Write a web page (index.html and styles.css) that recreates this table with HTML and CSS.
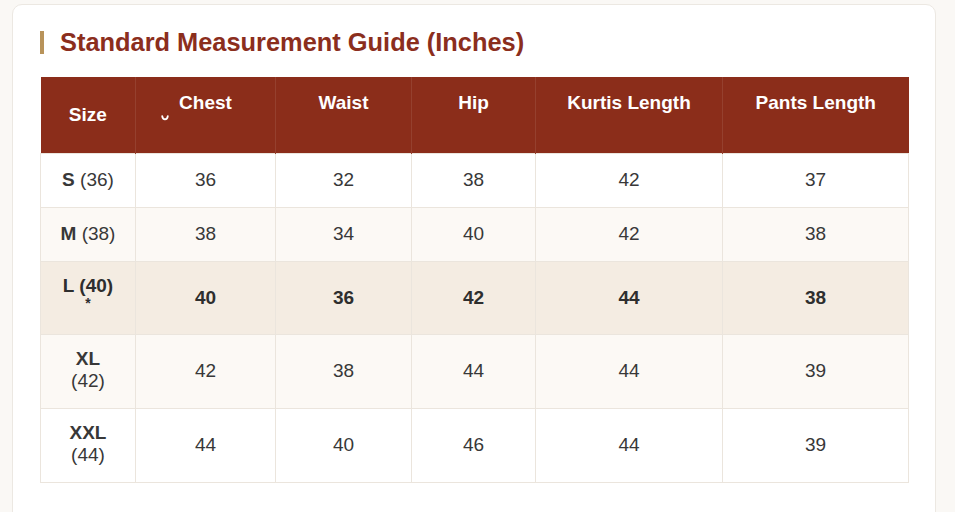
FILE: index.html
```html
<!DOCTYPE html>
<html>
<head>
<meta charset="utf-8">
<link rel="stylesheet" href="styles.css">
</head>
<body>
<div class="card">
  <h2 class="title"><span class="bar"></span>Standard Measurement Guide (Inches)</h2>
  <table class="guide">
    <colgroup>
      <col class="c-size"><col class="c-chest"><col class="c-waist"><col class="c-hip"><col class="c-kurti"><col class="c-pants">
    </colgroup>
    <thead>
      <tr>
        <th class="th-size">Size</th>
        <th class="th-top"><span class="sort">
          <svg width="8" height="6" viewBox="0 0 8 6"><path d="M1.2 1.2 Q1.6 4.4 4 4.4 Q6.4 4.4 6.8 1.2" fill="none" stroke="#fff" stroke-width="1.8" stroke-linecap="round" stroke-linejoin="round"/></svg>
        </span>Chest</th>
        <th class="th-top">Waist</th>
        <th class="th-top">Hip</th>
        <th class="th-top">Kurtis Length</th>
        <th class="th-top">Pants Length</th>
      </tr>
    </thead>
    <tbody>
      <tr class="r-short">
        <td class="size"><b>S</b> (36)</td><td>36</td><td>32</td><td>38</td><td>42</td><td>37</td>
      </tr>
      <tr class="r-short alt">
        <td class="size"><b>M</b> (38)</td><td>38</td><td>34</td><td>40</td><td>42</td><td>38</td>
      </tr>
      <tr class="r-mid hl">
        <td class="size"><div class="size-l">L (40)</div><div class="star">*</div></td><td>40</td><td>36</td><td>42</td><td>44</td><td>38</td>
      </tr>
      <tr class="r-tall alt">
        <td class="size"><div class="lbl">XL</div><div class="num">(42)</div></td><td>42</td><td>38</td><td>44</td><td>44</td><td>39</td>
      </tr>
      <tr class="r-tall">
        <td class="size"><div class="lbl">XXL</div><div class="num">(44)</div></td><td>44</td><td>40</td><td>46</td><td>44</td><td>39</td>
      </tr>
    </tbody>
  </table>
</div>
</body>
</html>
```
FILE: styles.css
```css
html, body {
  margin: 0;
  padding: 0;
  background: #faf8f5;
  font-family: "Liberation Sans", Arial, sans-serif;
}
.card {
  width: 924px;
  margin: 4px 0 0 12px;
  background: #fff;
  border: 1px solid #ece8e2;
  border-radius: 10px;
  padding: 22px 27px 40px 27px;
  box-sizing: border-box;
  height: 560px;
}
.title {
  display: flex;
  align-items: center;
  margin: 0 0 20px 0;
  height: 30px;
  font-size: 25.4px;
  font-weight: bold;
  color: #8b2e1d;
}
.bar {
  display: inline-block;
  width: 4px;
  height: 23px;
  background: #b8935a;
  margin-right: 16px;
}
.guide {
  border-collapse: collapse;
  table-layout: fixed;
  width: 868px;
}
.c-size { width: 95px; }
.c-chest { width: 140px; }
.c-waist { width: 136px; }
.c-hip { width: 124px; }
.c-kurti { width: 187px; }
.c-pants { width: 186px; }
thead tr {
  height: 76px;
  background: #8b2d1a;
}
th {
  color: #fff;
  font-size: 19px;
  font-weight: bold;
  text-align: center;
  padding: 0;
  border-right: 1px solid #95402e;
  position: relative;
  line-height: 22px;
}
th:last-child { border-right: none; }
.th-size { vertical-align: middle; padding-top: 0; }
.th-top { vertical-align: top; padding-top: 15px; }
.sort {
  position: absolute;
  left: 25px;
  top: 38px;
  line-height: 0;
}
td {
  border: 1px solid #ebe5dd;
  text-align: center;
  vertical-align: middle;
  font-size: 19px;
  color: #383838;
  padding: 0;
  line-height: 22px;
}
.r-short { height: 54px; }
.r-mid { height: 73px; }
.r-tall { height: 74px; }
.alt { background: #fcf9f5; }
.hl { background: #f4ece2; }
.hl td { font-weight: bold; color: #2e2e2e; }
.size b { font-weight: bold; }
.size-l { line-height: 22px; margin-top: -12px; }
.star { font-size: 14px; line-height: 12px; }
.lbl { font-weight: bold; line-height: 21px; margin-top: -3px; }
.num { line-height: 23px; }
```
